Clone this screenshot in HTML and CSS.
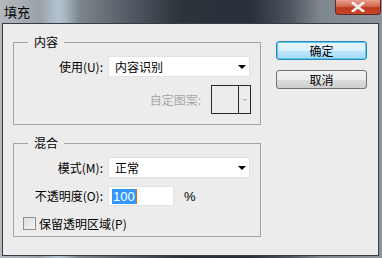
FILE: index.html
```html
<!DOCTYPE html>
<html lang="zh-CN">
<head>
  <meta charset="UTF-8">
  <title>填充</title>
  <link rel="stylesheet" href="styles.css">
</head>
<body>
  <div class="window">
    <!-- Barra de título -->
    <div class="titlebar">
      <span class="title">填充</span>
      <span class="close-btn">
        <svg width="14" height="10" viewBox="0 0 14 10">
          <path d="M2 1 L12 9 M12 1 L2 9" stroke="#fff" stroke-width="2.6" stroke-linecap="square"/>
          <path d="M2 1 L12 9 M12 1 L2 9" stroke="#e8e8e8" stroke-width="1.4"/>
        </svg>
      </span>
    </div>

    <div class="client">
      <div class="left">
        <fieldset class="group group-content">
          <legend>内容</legend>
          <div class="row">
            <label class="lbl">使用(<u>U</u>):</label>
            <div class="select"><span>内容识别</span><i class="arrow"></i></div>
          </div>
          <div class="row pattern-row">
            <label class="lbl-dim">自定图案:</label>
            <div class="pattern"><span class="swatch"></span><span class="pat-arrow"></span></div>
          </div>
        </fieldset>

        <fieldset class="group group-blend">
          <legend>混合</legend>
          <div class="row">
            <label class="lbl">模式(<u>M</u>):</label>
            <div class="select"><span>正常</span><i class="arrow"></i></div>
          </div>
          <div class="row opacity-row">
            <label class="lbl">不透明度(<u>O</u>):</label>
            <div class="textbox"><span class="sel">100</span><span class="caret"></span></div>
            <span class="pct">%</span>
          </div>
          <div class="check-row">
            <span class="checkbox"></span>
            <span>保留透明区域(<u>P</u>)</span>
          </div>
        </fieldset>
      </div>

      <div class="buttons">
        <button class="btn btn-default">确定</button>
        <button class="btn">取消</button>
      </div>
    </div>
  </div>
</body>
</html>
```

FILE: styles.css
```css
/* Janela estilo Windows 7 */
body {
  margin: 0;
  padding: 0;
  width: 382px;
  height: 258px;
  overflow: hidden;
  font-family: "Liberation Sans", "Noto Sans CJK SC", sans-serif;
  font-size: 12px;
  color: #000;
}

u { text-decoration: none; }

.window {
  width: 382px;
  height: 258px;
  box-sizing: border-box;
  padding: 0 3px 2px 2px;
  display: flex;
  flex-direction: column;
  background: linear-gradient(90deg, #b4b9be 0px, #9aa2a9 40px, #b3c3d2 58px, #a9b8c6 64px, #7c848c 80px,
    #4a535b 140px, #2b333b 180px, #28313a 250px, #4d565e 290px, #7f878e 320px, #8c949a 382px);
}

.titlebar {
  height: 23px;
  display: flex;
  justify-content: space-between;
  align-items: flex-start;
}

.title {
  font-family: "Noto Sans CJK SC", sans-serif;
  font-size: 13px;
  line-height: 14px;
  margin: 5px 0 0 2px;
  color: #000;
}

.close-btn {
  width: 46px;
  height: 15px;
  margin-right: -2px;
  box-sizing: border-box;
  border: 1px solid #5e2a24;
  border-top: none;
  border-radius: 0 0 4px 4px;
  background: linear-gradient(#e8a08e 0%, #d3684f 45%, #bd3a1f 55%, #c9462a 100%);
  display: flex;
  justify-content: center;
  align-items: center;
}

.client {
  flex: 1;
  background: #ececec;
  border: 1px solid #353c43;
  display: flex;
  justify-content: space-between;
  padding: 0 11px 0 10px;
}

.left {
  width: 248px;
  padding-top: 10px;
}

.group {
  margin: 0;
  padding: 0;
  border: 1px solid #a3a3a3;
  width: 248px;
  box-sizing: border-box;
}

.group legend {
  margin-left: 14px;
  padding: 0 6px;
  font-family: "Noto Sans CJK SC", sans-serif;
  font-size: 12px;
  line-height: 16px;
}

.group-content { height: 91px; }

.group-blend {
  margin-top: 10px;
  height: 102px;
}

.row {
  display: flex;
  align-items: center;
}

.group-content .row:first-of-type,
.group-blend .row:first-of-type { margin-top: 6px; }

.lbl {
  width: 89px;
  text-align: right;
  margin-right: 5px;
  line-height: 16px;
  font-family: "Noto Sans CJK SC", sans-serif;
}

.select {
  width: 142px;
  height: 21px;
  box-sizing: border-box;
  background: #fff;
  border: 1px solid #e2e2e2;
  display: flex;
  align-items: center;
  justify-content: space-between;
  padding: 0 3px 0 6px;
  font-family: "Noto Sans CJK SC", sans-serif;
}

.arrow {
  width: 0;
  height: 0;
  border-left: 4px solid transparent;
  border-right: 4px solid transparent;
  border-top: 4px solid #000;
}

.pattern-row {
  justify-content: flex-end;
  margin-top: 8px;
  padding-right: 9px;
}

.lbl-dim {
  color: #a8a8a8;
  margin-right: 10px;
  font-family: "Noto Sans CJK SC", sans-serif;
}

.pattern {
  width: 40px;
  height: 29px;
  box-sizing: border-box;
  border: 1px solid #2a2a2a;
  display: flex;
}

.swatch {
  width: 26px;
  border-right: 1px solid #2a2a2a;
}

.pat-arrow {
  flex: 1;
  position: relative;
}

.pat-arrow::after {
  content: "";
  position: absolute;
  left: 4px;
  top: 13px;
  border-left: 2px solid transparent;
  border-right: 2px solid transparent;
  border-top: 2px solid #b0b0b0;
}

.opacity-row { margin-top: 8px; }

.textbox {
  width: 66px;
  height: 20px;
  box-sizing: border-box;
  background: #fff;
  border: 1px solid #e2e2e2;
  display: flex;
  align-items: center;
  padding-left: 3px;
  font-family: "Liberation Sans", sans-serif;
  font-size: 13px;
}

.sel {
  background: #3399ff;
  color: #fff;
  line-height: 15px;
  padding: 0 1px;
}

.caret {
  width: 1px;
  height: 15px;
  background: #e06a10;
}

.pct {
  margin-left: 10px;
  font-size: 13px;
}

.check-row {
  display: flex;
  align-items: center;
  margin: 9px 0 0 9px;
  font-family: "Noto Sans CJK SC", sans-serif;
}

.checkbox {
  width: 13px;
  height: 13px;
  box-sizing: border-box;
  border: 1px solid #8f8f8f;
  background: linear-gradient(135deg, #dcdcdc, #f6f6f6);
  margin-right: 3px;
}

.buttons {
  width: 91px;
  padding-top: 17px;
  display: flex;
  flex-direction: column;
  gap: 10px;
}

button.btn {
  height: 19px;
  width: 91px;
  padding: 0;
  border: 1px solid #707070;
  border-radius: 3px;
  background: linear-gradient(#f2f2f2 0%, #ebebeb 50%, #dddddd 51%, #cfcfcf 100%);
  font-family: "Noto Sans CJK SC", sans-serif;
  font-size: 12px;
  line-height: 15px;
  color: #000;
}

button.btn-default {
  border-color: #3c7fb1;
  box-shadow: inset 0 0 0 1px #48d0f5;
  background: linear-gradient(#eaf6fd 0%, #d9f0fc 50%, #bee6fd 51%, #a7d9f5 100%);
}
```
